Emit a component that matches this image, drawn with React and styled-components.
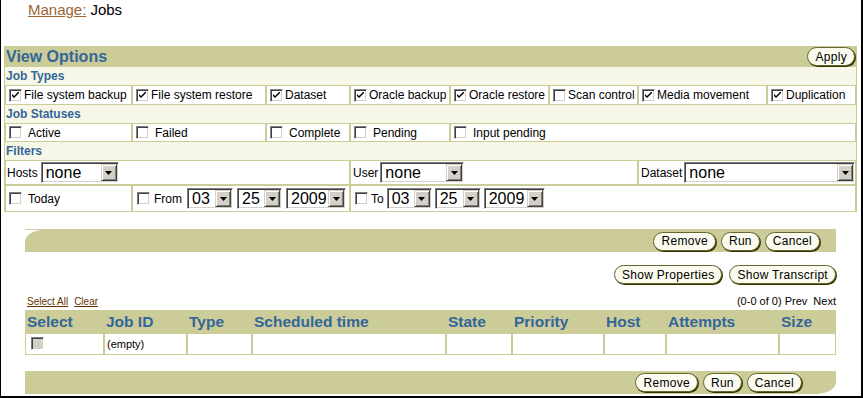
import React from 'react';
import styled, { createGlobalStyle } from 'styled-components';

const tan = '#cccc99';
const light = '#f7f7e7';
const blue = '#336699';

const GlobalStyle = createGlobalStyle`
    body {
        margin: 0;
        font-family: "Liberation Sans", Arial, sans-serif;
        background: #fff;
    }
`;

const Window = styled.div`
    width: 863px;
    height: 398px;
    box-sizing: border-box;
    border-left: 1px solid #000;
    border-right: 2px solid #000;
    border-bottom: 2px solid #000;
    overflow: hidden;
    background: #fff;
`;

const Title = styled.div`
    height: 46px;
    box-sizing: border-box;
    padding: 1px 0 0 27px;
    font-size: 15px;
    line-height: 18px;
    color: #000;

    a {
        color: #996633;
        text-decoration: underline;
        margin-right: 4px;
    }
`;

const Panel = styled.div`
    width: 853px;
    margin-left: 3px;
    box-sizing: border-box;
    border-left: 1px solid ${tan};
    border-right: 1px solid ${tan};
`;

const PanelHeader = styled.div`
    display: flex;
    justify-content: space-between;
    align-items: center;
    height: 21px;
    padding: 0 1px 0 1px;
    background: ${tan};

    h2 {
        margin: 0;
        font-size: 16px;
        font-weight: bold;
        color: ${blue};
    }
`;

const Band = styled.div`
    height: 18px;
    line-height: 18px;
    padding-left: 1px;
    background: ${light};
    font-size: 12px;
    font-weight: bold;
    color: ${blue};
`;

const Row = styled.div`
    display: flex;
    height: ${p => p.$h}px;
`;

const Cell = styled.div`
    display: flex;
    align-items: center;
    gap: ${p => p.$gap || 0}px;
    box-sizing: border-box;
    width: ${p => (p.$w ? `${p.$w}px` : 'auto')};
    flex: ${p => (p.$w ? 'none' : '1')};
    border: 1px solid ${tan};
    padding-left: ${p => (p.$pl === undefined ? 4 : p.$pl)}px;
    font-size: 12px;
    color: #000;
    white-space: nowrap;
    overflow: hidden;
`;

const Label = styled.span`
    margin-left: ${p => p.$ml || 0}px;
    margin-right: ${p => p.$mr || 0}px;
`;

const Box = styled.span`
    display: inline-flex;
    align-items: center;
    justify-content: center;
    width: 13px;
    height: 13px;
    box-sizing: border-box;
    border: 1px solid;
    border-color: #808080 #ffffff #ffffff #808080;
    box-shadow: inset 1px 1px 0 #404040, inset -1px -1px 0 #d4d0c8;
    background: ${p => (p.$disabled ? '#d4d0c8' : '#fff')};
    flex: none;
`;

const Checkbox = ({ checked, disabled }) => (
    <Box $disabled={disabled}>
        {checked && (
            <svg width="7" height="7" viewBox="0 0 7 7">
                <path d="M0 2 L0 4 L2 6 L7 1 L7 -1 L2 4 Z" fill="#000" />
            </svg>
        )}
    </Box>
);

const SelectBox = styled.div`
    display: flex;
    align-items: stretch;
    width: ${p => p.$w}px;
    height: 21px;
    box-sizing: border-box;
    padding: 1px;
    border: 1px solid;
    border-color: #808080 #ffffff #ffffff #808080;
    box-shadow: inset 1px 1px 0 #404040, inset -1px -1px 0 #d4d0c8;
    background: #fff;
    flex: none;

    span {
        flex: 1;
        padding-left: 3px;
        font-size: 16px;
        line-height: 17px;
        color: #000;
    }
`;

const DropButton = styled.div`
    display: flex;
    align-items: center;
    justify-content: center;
    width: 16px;
    box-sizing: border-box;
    background: #d4d0c8;
    border: 1px solid;
    border-color: #d4d0c8 #404040 #404040 #d4d0c8;
    box-shadow: inset 1px 1px 0 #fff, inset -1px -1px 0 #808080;
`;

const Select = ({ value, w }) => (
    <SelectBox $w={w}>
        <span>{value}</span>
        <DropButton>
            <svg width="7" height="4" viewBox="0 0 7 4">
                <path d="M0 0 H7 L3.5 4 Z" fill="#000" />
            </svg>
        </DropButton>
    </SelectBox>
);

const Button = styled.button`
    height: 19px;
    padding: 0 7px;
    box-sizing: border-box;
    border: 1px solid #666633;
    border-radius: 10px;
    box-shadow: 1px 1px 0 #333300;
    background: #fbfbef;
    font-family: "Liberation Sans", Arial, sans-serif;
    font-size: 12px;
    letter-spacing: 0.3px;
    line-height: 16px;
    color: #000;
    cursor: pointer;
`;

const Section = styled.div`
    width: 811px;
    margin-left: 24px;
`;

const TopBar = styled.div`
    margin-top: 17px;
    border-top: 1px solid ${tan};

    div {
        display: flex;
        justify-content: flex-end;
        align-items: center;
        gap: 5px;
        height: 22px;
        padding-right: 16px;
        background: ${tan};
        border-top-left-radius: 18px 12px;
    }
`;

const BottomBar = styled.div`
    display: flex;
    justify-content: flex-end;
    align-items: center;
    gap: 5px;
    height: 23px;
    margin-top: 16px;
    padding-right: 34px;
    background: ${tan};
    border-bottom-right-radius: 20px 12px;
`;

const ButtonRow = styled.div`
    display: flex;
    justify-content: flex-end;
    gap: 7px;
    margin-top: 13px;
`;

const ListInfo = styled.div`
    display: flex;
    justify-content: space-between;
    align-items: flex-end;
    height: 26px;
    padding: 0 0 1px 2px;
    box-sizing: border-box;
`;

const Links = styled.div`
    display: flex;
    gap: 6px;
    font-size: 10px;
    line-height: 12px;
    padding-bottom: 1px;

    a {
        color: #663300;
        text-decoration: underline;
    }
`;

const Pager = styled.div`
    font-size: 11px;
    line-height: 13px;
    color: #000;
    margin-bottom: 1px;
`;

const Table = styled.table`
    width: 811px;
    border-collapse: separate;
    border-spacing: 0;
    table-layout: fixed;

    th {
        height: 23px;
        padding: 0 0 0 2px;
        background: ${tan};
        color: ${blue};
        font-size: 15.5px;
        font-weight: bold;
        text-align: left;
        white-space: nowrap;
    }

    td {
        height: 20px;
        padding: 0 0 0 2px;
        border: 1px solid ${tan};
        font-size: 11px;
        color: #000;
    }
`;

const columns = [
    ['Select', 79], ['Job ID', 83], ['Type', 65], ['Scheduled time', 194],
    ['State', 66], ['Priority', 92], ['Host', 62], ['Attempts', 113], ['Size', 57],
];

const jobTypes = [
    ['File system backup', 127, true], ['File system restore', 134, true],
    ['Dataset', 84, true], ['Oracle backup', 100, true], ['Oracle restore', 99, true],
    ['Scan control', 89, false], ['Media movement', 129, true], ['Duplication', 0, true],
];

const statuses = [['Active', 127], ['Failed', 134], ['Complete', 84], ['Pending', 100], ['Input pending', 0]];

const ActionButtons = () => (
    <>
        <Button>Remove</Button>
        <Button>Run</Button>
        <Button>Cancel</Button>
    </>
);

const App = () => {
    return (
        <Window>
            <GlobalStyle />
            <Title>
                <a href="#manage">Manage:</a>Jobs
            </Title>

            <Panel>
                <PanelHeader>
                    <h2>View Options</h2>
                    <Button>Apply</Button>
                </PanelHeader>
                <Band>Job Types</Band>
                <Row $h={20}>
                    {jobTypes.map(([name, w, on]) => (
                        <Cell key={name} $w={w} $gap={2} $pl={3}>
                            <Checkbox checked={on} />
                            <Label>{name}</Label>
                        </Cell>
                    ))}
                </Row>
                <Band>Job Statuses</Band>
                <Row $h={19}>
                    {statuses.map(([name, w]) => (
                        <Cell key={name} $w={w} $gap={6} $pl={3}>
                            <Checkbox />
                            <Label>{name}</Label>
                        </Cell>
                    ))}
                </Row>
                <Band>Filters</Band>
                <Row $h={25}>
                    <Cell $w={345} $pl={1} $gap={3}>
                        <Label>Hosts</Label>
                        <Select value="none" w={78} />
                    </Cell>
                    <Cell $w={288} $pl={2} $gap={2}>
                        <Label>User</Label>
                        <Select value="none" w={84} />
                    </Cell>
                    <Cell $pl={2} $gap={2}>
                        <Label>Dataset</Label>
                        <Select value="none" w={171} />
                    </Cell>
                </Row>
                <Row $h={27}>
                    <Cell $w={127} $gap={6} $pl={3}>
                        <Checkbox />
                        <Label>Today</Label>
                    </Cell>
                    <Cell $w={218} $gap={4}>
                        <Checkbox />
                        <Label $mr={1}>From</Label>
                        <Select value="03" w={46} />
                        <Select value="25" w={45} />
                        <Select value="2009" w={60} />
                    </Cell>
                    <Cell $gap={3}>
                        <Checkbox />
                        <Label>To</Label>
                        <Select value="03" w={45} />
                        <Select value="25" w={46} />
                        <Select value="2009" w={61} />
                    </Cell>
                </Row>
            </Panel>

            <Section>
                <TopBar>
                    <div>
                        <ActionButtons />
                    </div>
                </TopBar>

                <ButtonRow>
                    <Button>Show Properties</Button>
                    <Button>Show Transcript</Button>
                </ButtonRow>

                <ListInfo>
                    <Links>
                        <a href="#all">Select All</a>
                        <a href="#clear">Clear</a>
                    </Links>
                    <Pager>(0-0 of 0) Prev&nbsp; Next</Pager>
                </ListInfo>

                <Table>
                    <colgroup>
                        {columns.map(([name, w]) => <col key={name} style={{ width: w }} />)}
                    </colgroup>
                    <thead>
                        <tr>
                            {columns.map(([name]) => <th key={name}>{name}</th>)}
                        </tr>
                    </thead>
                    <tbody>
                        <tr>
                            <td style={{ paddingLeft: 5 }}><Checkbox disabled /></td>
                            <td>(empty)</td>
                            <td></td>
                            <td></td>
                            <td></td>
                            <td></td>
                            <td></td>
                            <td></td>
                            <td></td>
                        </tr>
                    </tbody>
                </Table>

                <BottomBar>
                    <ActionButtons />
                </BottomBar>
            </Section>
        </Window>
    );
};

export default App;
